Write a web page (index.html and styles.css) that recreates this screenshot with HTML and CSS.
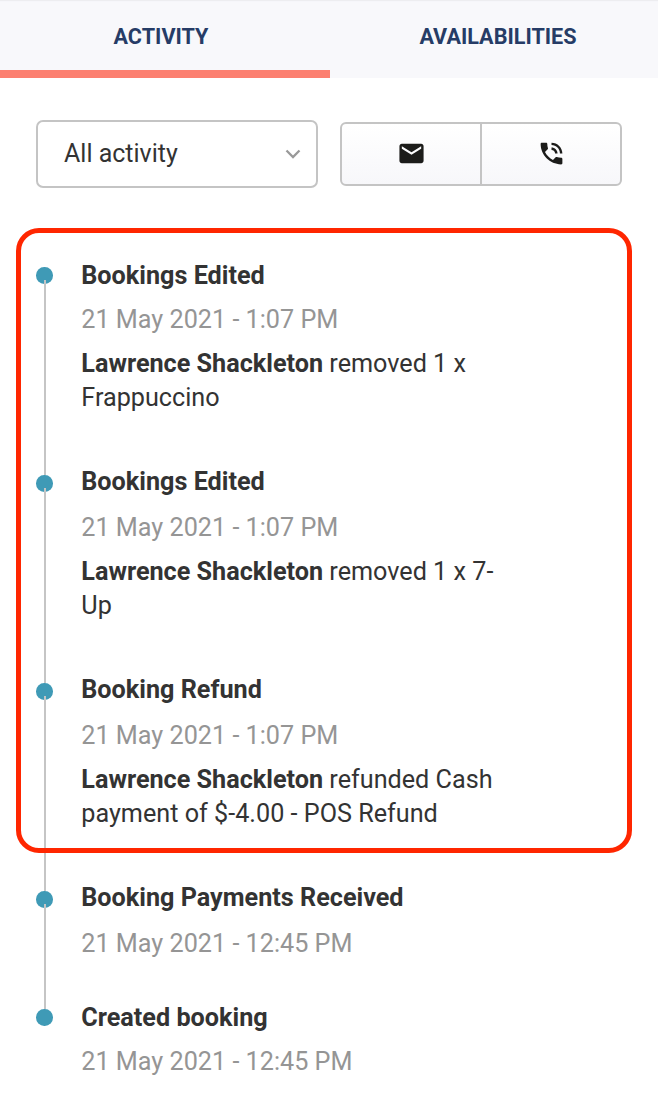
FILE: index.html
```html
<!DOCTYPE html>
<html lang="en">
<head>
<meta charset="utf-8">
<title>Activity</title>
<link rel="stylesheet" href="styles.css">
</head>
<body>
<nav class="tabs">
  <a class="tab tab-active">ACTIVITY</a>
  <a class="tab tab-right">AVAILABILITIES</a>
</nav>
<div class="toolbar">
  <div class="select">
    <span>All activity</span>
    <svg class="chevron" width="16" height="10" viewBox="0 0 16 10"><path d="M1.500 1.500 8 8l6.500-6.500" fill="none" stroke="#999" stroke-width="2.300"/></svg>
  </div>
  <div class="buttons">
    <button class="button" aria-label="Email"><svg class="icon" viewBox="0 0 24 24"><path d="M20 4H4c-1.100 0-1.990.9-1.990 2L2 18c0 1.100.9 2 2 2h16c1.100 0 2-.9 2-2V6c0-1.100-.9-2-2-2zm0 4-8 5-8-5V6l8 5 8-5v2z"/></svg></button>
    <button class="button" aria-label="Call"><svg class="icon" viewBox="0 0 24 24"><path d="M20 15.500c-1.250 0-2.450-.2-3.570-.57-.35-.11-.74-.03-1.020.24l-2.200 2.200c-2.830-1.440-5.150-3.750-6.590-6.590l2.200-2.210c.28-.26.36-.65.25-1C8.700 6.450 8.500 5.250 8.500 4c0-.55-.45-1-1-1H4c-.55 0-1 .45-1 1 0 9.390 7.610 17 17 17 .55 0 1-.45 1-1v-3.500c0-.55-.45-1-1-1zM19 12h2c0-4.970-4.030-9-9-9v2c3.870 0 7 3.130 7 7zm-4 0h2c0-2.760-2.240-5-5-5v2c1.660 0 3 1.340 3 3z"/></svg></button>
  </div>
</div>
<main class="timeline">
  <article class="entry">
    <div class="rail"><i class="dot"></i><i class="line"></i></div>
    <div class="content">
      <h3 class="title">Bookings Edited</h3>
      <time class="date">21 May 2021 - 1:07 PM</time>
      <p class="detail"><b>Lawrence Shackleton</b> removed 1 x Frappuccino</p>
    </div>
  </article>
  <article class="entry">
    <div class="rail"><i class="dot"></i><i class="line"></i></div>
    <div class="content">
      <h3 class="title title-raised">Bookings Edited</h3>
      <time class="date">21 May 2021 - 1:07 PM</time>
      <p class="detail"><b>Lawrence Shackleton</b> removed 1 x 7-<br>Up</p>
    </div>
  </article>
  <article class="entry">
    <div class="rail"><i class="dot"></i><i class="line"></i></div>
    <div class="content">
      <h3 class="title title-raised">Booking Refund</h3>
      <time class="date">21 May 2021 - 1:07 PM</time>
      <p class="detail"><b>Lawrence Shackleton</b> refunded Cash payment of $-4.00 - POS Refund</p>
    </div>
  </article>
  <article class="entry entry-short">
    <div class="rail"><i class="dot"></i><i class="line"></i></div>
    <div class="content">
      <h3 class="title title-raised">Booking Payments Received</h3>
      <time class="date">21 May 2021 - 12:45 PM</time>
    </div>
  </article>
  <article class="entry entry-short">
    <div class="rail"><i class="dot"></i></div>
    <div class="content">
      <h3 class="title">Created booking</h3>
      <time class="date">21 May 2021 - 12:45 PM</time>
    </div>
  </article>
  <div class="highlight"></div>
</main>
</body>
</html>
```
FILE: styles.css
```css
* { box-sizing: border-box; }
body {
  margin: 0;
  height: 1112px;
  overflow: hidden;
  background: #fff;
  color: #333;
  font: 400 25px/34px Roboto, sans-serif;
}
.tabs {
  display: grid;
  grid-template-columns: 330px 1fr;
  height: 78px;
  background: #f8f8fb;
  box-shadow: inset 0 2px 1px -1px #ececef;
}
.tab {
  padding: 20px 8px 0 0;
  text-align: center;
  color: #263c66;
  font-size: 21.600px;
  line-height: 34px;
  font-weight: 700;
}
.tab-right { padding-right: 0; padding-left: 8px; }
.tab-active { border-bottom: 8px solid #fc7f70; }
.toolbar {
  display: flex;
  align-items: center;
  gap: 22px;
  padding: 42px 36px 0;
}
.select {
  display: flex;
  align-items: center;
  justify-content: space-between;
  width: 282px;
  height: 68px;
  padding: 0 15px 0 26px;
  border: 2px solid #c4c4c4;
  border-radius: 7px;
}
.chevron { margin-bottom: 1px; }
.buttons {
  display: flex;
  width: 282px;
  height: 64px;
  border: 2px solid #c4c4c4;
  border-radius: 6px;
  background: linear-gradient(#fff, #f7f7fa);
}
.button {
  display: flex;
  flex: 1;
  align-items: center;
  justify-content: center;
  padding: 0 0 1px;
  border: 0;
  background: none;
}
.button + .button { border-left: 2px solid #c4c4c4; }
.icon { width: 29px; height: 29px; fill: #1c1c1a; }
.timeline {
  position: relative;
  padding: 79px 36px 0;
  font-size: 25.200px;
}
.entry { display: flex; height: 208px; }
.entry-short { height: 118px; }
.rail {
  display: flex;
  flex: none;
  flex-direction: column;
  width: 45.300px;
}
.dot {
  width: 16.500px;
  height: 16.500px;
  flex: none;
  border-radius: 50%;
  background: #3f9ab6;
}
.line {
  flex: 1;
  width: 2px;
  margin: -3.500px 0 0 8px;
  background: #c5c5c5;
}
.content { width: 440px; }
.title {
  height: 44px;
  margin: -8px 0 0;
  font-size: 25.200px;
  font-weight: 700;
}
.title-raised { height: 46px; margin-top: -10px; }
.date { display: block; height: 44px; color: #959595; }
.detail { margin: 0; }
.highlight {
  position: absolute;
  left: 15.500px;
  top: 39.500px;
  width: 616px;
  height: 625px;
  border: 5px solid #ff2600;
  border-radius: 23px;
}
```
